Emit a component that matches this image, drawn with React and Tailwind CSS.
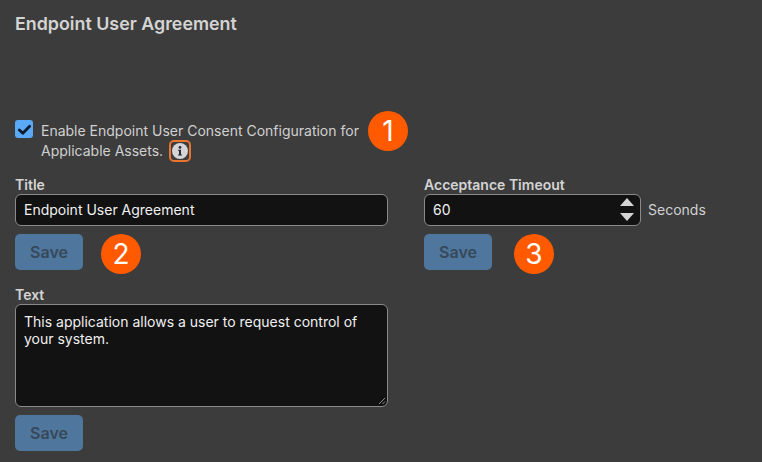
const font = { fontFamily: "Inter, 'Liberation Sans', sans-serif" };

function Badge({ n, className }) {
  return (
    <div className={"absolute flex h-10 w-10 items-center justify-center rounded-full bg-[#ff5a00] text-[28px] leading-none font-normal text-white " + className}>
      {n}
    </div>
  );
}

function SaveButton() {
  return (
    <button className="mt-2 flex h-9 w-[68px] items-center justify-center rounded-[5px] bg-[#4f769c] text-base font-semibold text-[#37485a]">
      Save
    </button>
  );
}

export default function App() {
  return (
    <div style={font} className="relative h-[462px] w-[762px] overflow-hidden bg-[#3c3c3c] px-[15px] text-[#d8d8d8]">
      <h1 className="pt-[14px] text-[17.85px] leading-5 font-semibold text-[#d4d4d4]">Endpoint User Agreement</h1>

      <div className="mt-[86px] flex items-start">
        <div className="flex h-[18px] w-[18px] items-center justify-center rounded-[3px] bg-[#5aa9f6]">
          <svg viewBox="0 0 16 16" className="h-[15px] w-[15px]" fill="none" stroke="#0e1c2c" strokeWidth="3" strokeLinecap="round" strokeLinejoin="round">
            <path d="M2.5 8.5 6.2 12 13.5 4.5" />
          </svg>
        </div>
        <div className="mt-[1px] ml-2 w-[330px] text-sm leading-5 text-[#d0d0d0]">
          <div>Enable Endpoint User Consent Configuration for</div>
          <div className="flex items-center">
            <span>Applicable Assets.</span>
            <span className="-my-px ml-[6px] flex h-[22px] w-[22px] items-center justify-center rounded-[5px] border-2 border-[#e8742f]">
              <svg viewBox="0 0 16 16" className="h-4 w-4">
                <circle cx="8" cy="8" r="8" fill="#d5d5d8" />
                <circle cx="8" cy="4.4" r="1.4" fill="#2c2c36" />
                <path d="M6.2 6.8H9v4.6h1v1.2H6v-1.2h1V8H6.2z" fill="#2c2c36" />
              </svg>
            </span>
          </div>
        </div>
      </div>

      <div className="mt-[15px] flex items-start gap-9">
        <div className="w-[373px]">
          <label className="block text-sm leading-[18px] font-semibold text-[#d4d4d4]">Title</label>
          <div className="flex h-8 items-center rounded-md border border-[#8a8a8a] bg-[#121212] px-2 text-sm text-[#f0f0f0]">
            Endpoint User Agreement
          </div>
          <SaveButton />
        </div>
        <div>
          <label className="block text-sm leading-[18px] font-semibold text-[#d4d4d4]">Acceptance Timeout</label>
          <div className="flex items-center">
            <div className="flex h-8 w-[217px] items-center justify-between rounded-md border border-[#8a8a8a] bg-[#121212] pr-[5px] pl-2 text-sm text-[#f0f0f0]">
              <span>60</span>
              <svg viewBox="0 0 16 26" className="h-[26px] w-4" fill="#d5d5d5">
                <path d="M8 1 15 9H1z" />
                <path d="M8 24 15 16H1z" />
              </svg>
            </div>
            <span className="ml-[7px] text-sm text-[#d0d0d0]">Seconds</span>
          </div>
          <SaveButton />
        </div>
      </div>

      <div className="mt-[16px] w-[373px]">
        <label className="block text-sm leading-[18px] font-semibold text-[#d4d4d4]">Text</label>
        <div className="relative h-[103px] rounded-md border border-[#8a8a8a] bg-[#121212] px-2 pt-2 text-sm leading-[17px] text-[#f0f0f0]">
          This application allows a user to request control of your system.
          <svg viewBox="0 0 8 8" className="absolute right-[1px] bottom-[1px] h-2 w-2" stroke="#b0b0b0" strokeWidth="0.8">
            <path d="M1 7 7 1M4.5 7 7 4.5" />
          </svg>
        </div>
        <SaveButton />
      </div>

      <Badge n="1" className="top-[111px] left-[368px]" />
      <Badge n="2" className="top-[234px] left-[101px]" />
      <Badge n="3" className="top-[234px] left-[514px]" />
    </div>
  );
}
